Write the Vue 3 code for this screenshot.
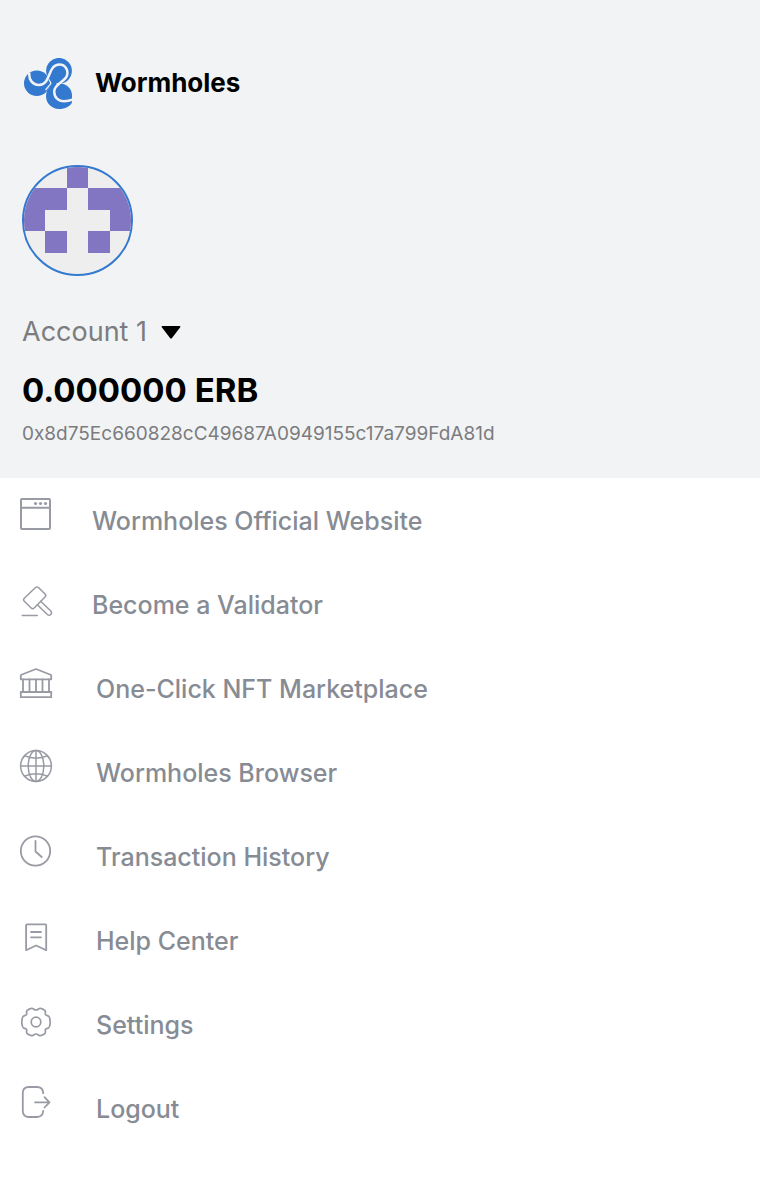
<script setup>
const account = {
  name: 'Account 1',
  balance: '0.000000 ERB',
  address: '0x8d75Ec660828cC49687A0949155c17a799FdA81d',
}

const avatarCells = [
  [2, 0], [0, 1], [1, 1], [3, 1], [4, 1], [0, 2], [4, 2], [1, 3], [3, 3],
]

const items = [
  { label: 'Wormholes Official Website', icon: 'window', tight: true },
  { label: 'Become a Validator', icon: 'gavel', tight: true },
  { label: 'One-Click NFT Marketplace', icon: 'bank' },
  { label: 'Wormholes Browser', icon: 'globe' },
  { label: 'Transaction History', icon: 'clock' },
  { label: 'Help Center', icon: 'bookmark' },
  { label: 'Settings', icon: 'gear' },
  { label: 'Logout', icon: 'exit' },
]
</script>

<template>
  <div class="panel">
    <header class="head">
      <div class="brand">
        <svg class="logo" viewBox="24 58 49 51" aria-hidden="true">
          <g fill="#3479d0">
            <circle cx="59" cy="70.8" r="12.9" />
            <circle cx="36.8" cy="83.3" r="12.8" />
            <path d="M51 86L59 83.3C66 83.3 72 88.5 72 95.5V102.5C70 106.5 65 109 59 109C52 109 46 103.5 46 96C46 91.5 48 88 51 86Z" />
            <path d="M47 77L60 83L50 88L45 84Z" />
          </g>
          <g fill="none" stroke="#f1f3f5">
            <path stroke-width="2.5" d="M29.300 72.500C28.600 79.500 32.500 85 39 85C51.500 85 47 64.600 59.500 64.600C65.500 64.600 68.800 70.500 66.800 76C64.500 82 54.300 84 54.200 91.500C54.200 97.500 58.500 101.300 64 101.300C67 101.300 69.800 100.800 73 99.500" />
            <path stroke-width="1.200" d="M45.500 90L51 83.500L49 79.500M56.500 84.200L62 82.700" />
          </g>
        </svg>
        <h1>Wormholes</h1>
      </div>

      <svg class="avatar" viewBox="0 0 5 5" role="img" aria-label="Account avatar">
        <rect
          v-for="([x, y], i) in avatarCells" :key="i"
          :x="x" :y="y" width="1" height="1" fill="#8275c1" shape-rendering="crispEdges"
        />
      </svg>

      <button type="button" class="account">
        {{ account.name }}
        <svg class="caret" viewBox="0 0 20 13" aria-hidden="true">
          <path d="M1.500 0H18.500Q20 0 19 1.500L11 12Q10 13.200 9 12L1 1.500Q0 0 1.500 0Z" />
        </svg>
      </button>
      <p class="balance">{{ account.balance }}</p>
      <p class="address">{{ account.address }}</p>
    </header>

    <nav class="menu">
      <a v-for="item in items" :key="item.label" href="#" class="item" :class="{ tight: item.tight }">
        <svg class="icon" viewBox="0 0 56 84" aria-hidden="true">
          <g v-if="item.icon === 'window'" stroke-width="2">
            <rect x="21" y="20" width="29" height="30" rx="1" />
            <path d="M21 28.700H50" />
            <g class="dots"><circle cx="35.500" cy="24.500" r="1.600" /><circle cx="40.500" cy="24.500" r="1.600" /><circle cx="45.500" cy="24.500" r="1.600" /></g>
          </g>
          <g v-else-if="item.icon === 'gavel'" stroke-width="1.500">
            <path d="M35.500 24.500Q37 23.300 38.500 24.500L45 31Q46.500 32.500 45 34L34.200 45Q32.700 46.500 31.200 45L24.300 38.200Q22.800 36.700 24.300 35.200Z" />
            <path d="M40.700 38.300L50.800 48Q52.300 49.800 50.700 51.500Q49 53 47.300 51.500L37.300 41.700M22.300 52.400H37.300" />
          </g>
          <g v-else-if="item.icon === 'bank'" stroke-width="1.800">
            <path d="M20.800 32.300V28L36 22L51.200 28V32.300ZM20.800 45H51.200V50.200H20.800Z" />
            <path d="M23 32.300V45M29.500 32.300V45M36 32.300V45M42.500 32.300V45M49 32.300V45" />
          </g>
          <g v-else-if="item.icon === 'globe'" stroke-width="1.500">
            <circle cx="36" cy="35" r="15.400" />
            <ellipse cx="36" cy="35" rx="7.800" ry="15.400" />
            <path d="M36 19.600V50.400M20.600 35H51.400M24.500 24.800Q36 29.500 47.500 24.800M24.500 45.200Q36 40.500 47.500 45.200" />
          </g>
          <g v-else-if="item.icon === 'clock'" stroke-width="1.800">
            <circle cx="35.500" cy="36" r="14.700" />
            <path d="M35.500 26V36.500L41.700 42" />
          </g>
          <g v-else-if="item.icon === 'bookmark'" stroke-width="1.800">
            <path d="M27 25.300H45.300Q46.200 25.300 46.200 26.200V51.200L36.100 46.500L26.100 51.200V26.200Q26.100 25.300 27 25.300ZM31 33H41M31 38.300H41" />
          </g>
          <g v-else-if="item.icon === 'gear'" stroke-width="1.700">
            <circle cx="36" cy="39" r="4.800" />
            <path d="M36 27C38.300 27 38.800 24.900 40.500 25.300C42.200 25.700 44 26.500 45 27.600C46.200 29 44.700 30.200 45.500 31.500C46.400 33 48.500 32.200 49.300 34C50 35.700 50.200 37.500 50.200 39S50 42.300 49.300 44C48.500 45.800 46.400 45 45.500 46.500C44.700 47.800 46.200 49 45 50.400C44 51.500 42.200 52.300 40.500 52.700C38.800 53.100 38.300 51 36 51S33.200 53.100 31.500 52.700C29.800 52.300 28 51.500 27 50.400C25.800 49 27.300 47.800 26.500 46.500C25.600 45 23.500 45.800 22.700 44C22 42.300 21.800 40.500 21.800 39S22 35.700 22.700 34C23.500 32.200 25.600 33 26.500 31.500C27.300 30.200 25.800 29 27 27.600C28 26.500 29.800 25.700 31.500 25.300C33.200 24.900 33.700 27 36 27Z" />
          </g>
          <g v-else stroke-width="1.800">
            <path d="M43.200 26.200C43 22 40.500 20 37 20H29Q22.800 20 22.800 26.200V43.800Q22.800 50 29 50H37C40.500 50 43 48 43.200 43.800M35 35.300H49.500M44.500 30.200L49.500 35.300L44.500 40.500" />
          </g>
        </svg>
        <span>{{ item.label }}</span>
      </a>
    </nav>
  </div>
</template>

<style>
body {
  margin: 0;
  background: #fff;
}
</style>

<style scoped>
.panel {
  font-family: Inter, "Liberation Sans", sans-serif;
  color: #000;
}
.head {
  display: flex;
  flex-direction: column;
  align-items: flex-start;
  padding: 56px 22px 29px;
  background: #f1f3f5;
}
.brand {
  display: flex;
  align-items: center;
  gap: 22px;
  height: 54px;
  padding-left: 2px;
}
.logo {
  width: 49px;
  height: 51px;
}
h1 {
  margin: 0;
  font-size: 26px;
  line-height: 32px;
  font-weight: 700;
}
.avatar {
  width: 107px;
  height: 107px;
  margin-top: 55px;
  border: 2px solid #3479d0;
  border-radius: 50%;
  background: #eee;
}
.account {
  display: flex;
  align-items: center;
  gap: 14px;
  margin-top: 38px;
  padding: 0;
  border: 0;
  background: none;
  color: #7c7c7e;
  font-family: inherit;
  font-size: 27px;
  line-height: 36px;
  cursor: pointer;
}
.caret {
  width: 20px;
  height: 13px;
  fill: #000;
}
.balance {
  margin: 19px 0 0;
  font-size: 33px;
  line-height: 42px;
  font-weight: 700;
}
.address {
  margin: 8px 0 0;
  color: #7c7c7e;
  font-size: 19px;
  line-height: 30px;
}
.menu {
  display: flex;
  flex-direction: column;
  padding: 1px 0 28px;
}
.item {
  display: flex;
  align-items: center;
  gap: 40px;
  height: 84px;
  color: #868b94;
  font-size: 25px;
  line-height: 32px;
  font-weight: 450;
  text-decoration: none;
}
.tight {
  gap: 36px;
}
.icon {
  flex: none;
  width: 56px;
  height: 84px;
  fill: none;
  stroke: #989ba3;
  stroke-linecap: round;
  stroke-linejoin: round;
}
.dots {
  fill: #989ba3;
  stroke: none;
}
</style>
